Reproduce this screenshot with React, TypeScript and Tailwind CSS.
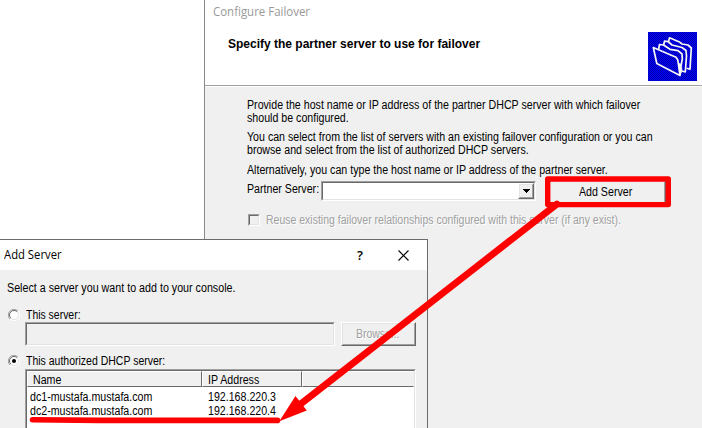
import React, { ReactNode } from "react";

const ui = "font-['Liberation_Sans',Arial,sans-serif] text-[12px] leading-[13px] whitespace-pre";
const caption = "block origin-left font-['Open_Sans','Noto_Sans',sans-serif] text-[12px] leading-[16px] whitespace-pre";
const disabled = "text-[#a0a0a0] [text-shadow:1px_1px_0_#ffffff]";
const sunken = "border border-t-[#a0a0a0] border-l-[#a0a0a0] border-r-white border-b-white";
const sunkenInner = "border border-t-[#696969] border-l-[#696969] border-r-[#e3e3e3] border-b-[#e3e3e3]";
const raised = "border border-t-white border-l-white border-r-[#696969] border-b-[#696969]";
const raisedInner = "border border-t-[#e3e3e3] border-l-[#e3e3e3] border-r-[#a0a0a0] border-b-[#a0a0a0]";

function Text({ children, className = "scale-x-[0.886] text-black" }: { children: ReactNode; className?: string }) {
  return <span className={`${ui} block origin-left ${className}`}>{children}</span>;
}

function FoldersIcon() {
  return (
    <div className="h-[49px] w-[49px] bg-[repeating-conic-gradient(#0000ff_0_25%,#0000b0_0_50%)] bg-[length:2px_2px]">
      <svg width="49" height="49" viewBox="0 0 49 49" fill="none" stroke="#f8f8f4" strokeWidth="1.7" strokeLinejoin="round">
        <path d="M20.5 9.5 L21.5 5.8 L32 10.3 L34 12 L40 13 L43.3 16 L42 37.3 L38.7 36.3" />
        <path d="M15.5 13.5 L16.5 9.2 L20 9.5 L24 13 L34 15.5 L38 18.5 L38.5 24 L37.3 40 L34 39" />
        <path d="M10.7 17 L11.5 12.5 L15.5 13 L22 17.3 L30 18.7 L34 22 L34.3 27 L33 34" />
        <path d="M5.3 15.5 L28 25.3 L29.8 28 L32 43.5 L8.8 31.5 Z" />
        <path d="M30.5 31 L33.5 32.5 L34 39 L32 43.5 Z" fill="#f8f8f4" strokeWidth="0.6" />
      </svg>
    </div>
  );
}

function ConfigureFailover() {
  return (
    <section className="absolute left-[204px] top-0 flex h-[428px] w-[498px] flex-col border-l border-[#8a8a8a] bg-[#f0f0f0]">
      <header className="flex h-[86px] shrink-0 items-start justify-between border-b border-[#a0a0a0] bg-white pr-[5px] pl-2">
        <div className="pt-1">
          <span className={`${caption} scale-x-[0.955] text-[#999999]`}>Configure Failover</span>
          <h1 className={`${ui} mt-[18px] ml-[15px] font-bold text-black`}>Specify the partner server to use for failover</h1>
        </div>
        <div className="mt-8">
          <FoldersIcon />
        </div>
      </header>
      <div className="h-px shrink-0 bg-white" />
      <main className="flex flex-col pt-[12px] pl-[42px]">
        <Text>Provide the host name or IP address of the partner DHCP server with which failover</Text>
        <Text>should be configured.</Text>
        <div className="h-[6px]" />
        <Text>You can select from the list of servers with an existing failover configuration or you can</Text>
        <Text>browse and select from the list of authorized DHCP servers.</Text>
        <div className="h-[7px]" />
        <Text>Alternatively, you can type the host name or IP address of the partner server.</Text>
        <div className="mt-[4px] flex h-[26px] items-start">
          <div className="w-[74px] shrink-0 pt-[2px]">
            <Text>Partner Server:</Text>
          </div>
          <div className={`h-[20px] w-[215px] shrink-0 ${sunken}`}>
            <div className={`flex h-full justify-end bg-white ${sunkenInner}`}>
              <div className={`h-full w-[16px] ${raised}`}>
                <div className={`flex h-full items-center justify-center bg-[#f0f0f0] ${raisedInner}`}>
                  <svg width="7" height="4" viewBox="0 0 7 4" shapeRendering="crispEdges">
                    <path d="M0 0H7L3.5 4Z" fill="#000" />
                  </svg>
                </div>
              </div>
            </div>
          </div>
          <div className={`-mt-px ml-[11px] h-[24px] w-[119px] shrink-0 ${raised}`}>
            <div className={`flex h-full items-center ${raisedInner}`}>
              <div className="pl-[30px]">
                <Text>Add Server</Text>
              </div>
            </div>
          </div>
        </div>
        <div className="mt-[7px] flex items-start gap-[6px] pl-px">
          <span className={`block h-[12px] w-[12px] ${sunken}`}>
            <span className={`block h-full ${sunkenInner}`} />
          </span>
          <Text className={`scale-x-[0.875] ${disabled}`}>Reuse existing failover relationships configured with this server (if any exist).</Text>
        </div>
      </main>
    </section>
  );
}

function Radio({ checked = false }: { checked?: boolean }) {
  return (
    <svg width="12" height="12" viewBox="0 0 12 12" fill="none">
      <circle cx="6" cy="6" r="4.6" fill="#fff" />
      <path d="M2 10A5.5 5.5 0 0 1 10 2" stroke="#a0a0a0" />
      <path d="M2.8 9.2A4.5 4.5 0 0 1 9.2 2.8" stroke="#696969" />
      <path d="M10 2A5.5 5.5 0 0 1 2 10" stroke="#fff" />
      <path d="M9.2 2.8A4.5 4.5 0 0 1 2.8 9.2" stroke="#e3e3e3" />
      {checked && <circle cx="6" cy="6" r="2" fill="#000" />}
    </svg>
  );
}

const servers = [
  { name: "dc1-mustafa.mustafa.com", ip: "192.168.220.3" },
  { name: "dc2-mustafa.mustafa.com", ip: "192.168.220.4" },
];

function ServerList() {
  return (
    <div className={`ml-[17px] h-[90px] w-[391px] shrink-0 ${sunken}`}>
      <div className={`h-full bg-white ${sunkenInner}`}>
        <div className="flex h-[16px] bg-[#f0f0f0]">
          <div className={`w-[175px] shrink-0 pt-[2px] pl-[5px] ${raised}`}>
            <Text>Name</Text>
          </div>
          <div className={`w-[100px] shrink-0 pt-[2px] pl-[5px] ${raised}`}>
            <Text>IP Address</Text>
          </div>
          <div className="grow border border-t-white border-r-transparent border-b-[#696969] border-l-white" />
        </div>
        <div className="pt-[3px]">
          {servers.map((s) => (
            <div key={s.name} className="flex h-[14px] items-center">
              <div className="w-[178px] shrink-0 pl-[3px]">
                <Text>{s.name}</Text>
              </div>
              <div className="pl-[3px]">
                <Text>{s.ip}</Text>
              </div>
            </div>
          ))}
        </div>
      </div>
    </div>
  );
}

function AddServer() {
  return (
    <section className="absolute top-[239px] left-0 flex h-[189px] w-[428px] flex-col overflow-hidden border-t border-r border-[#6b6b6b] bg-[#f0f0f0]">
      <header className="flex h-[30px] shrink-0 items-center bg-white pr-[18px] pl-1">
        <span className={`${caption} scale-x-[0.94] text-black`}>Add Server</span>
        <span className="mr-[35px] ml-auto font-['Open_Sans','Noto_Sans',sans-serif] text-[13px] leading-[16px] font-semibold text-black">?</span>
        <svg width="11" height="11" viewBox="0 0 11 11" stroke="#000" strokeWidth="1.1">
          <path d="M0.5 0.5L10.5 10.5M10.5 0.5L0.5 10.5" />
        </svg>
      </header>
      <div className="flex flex-col pt-[12px] pl-2">
        <div className="-ml-px">
          <Text className="scale-x-[0.892] text-black">Select a server you want to add to your console.</Text>
        </div>
        <div className="mt-[12px] flex h-[15px] items-center gap-[6px]">
          <Radio />
          <div className="pt-px">
            <Text className="scale-x-[0.87] text-black">This server:</Text>
          </div>
        </div>
        <div className="mt-0 flex gap-[6px] pl-[17px]">
          <div className={`h-[24px] w-[310px] shrink-0 ${sunken}`}>
            <div className={`h-full ${sunkenInner}`} />
          </div>
          <div className={`h-[24px] w-[75px] shrink-0 ${raised}`}>
            <div className={`flex h-full items-center pl-[13px] ${raisedInner}`}>
              <Text className={`scale-x-[0.87] ${disabled}`}>Browse...</Text>
            </div>
          </div>
        </div>
        <div className="mt-[7px] mb-[1px] flex h-[15px] items-center gap-[6px]">
          <Radio checked />
          <div className="pt-[2px]">
            <Text className="scale-x-[0.875] text-black">This authorized DHCP server:</Text>
          </div>
        </div>
        <ServerList />
      </div>
    </section>
  );
}

function Annotations() {
  return (
    <svg className="absolute top-0 left-0" width="702" height="428" viewBox="0 0 702 428" fill="none" stroke="#ff0000">
      <rect x="547.7" y="179" width="120.6" height="25.6" strokeWidth="5.4" strokeLinejoin="round" />
      <path d="M557 204L300 404.5" strokeWidth="6.8" strokeLinecap="round" />
      <path d="M279.3 421.3L295.5 396L306.8 410.5Z" fill="#ff0000" stroke="none" />
      <path d="M32.5 419.8L100 420.4H277.5" strokeWidth="5.6" strokeLinecap="round" />
    </svg>
  );
}

export default function App() {
  return (
    <div className="relative h-[428px] w-[702px] overflow-hidden bg-white">
      <ConfigureFailover />
      <AddServer />
      <Annotations />
    </div>
  );
}
